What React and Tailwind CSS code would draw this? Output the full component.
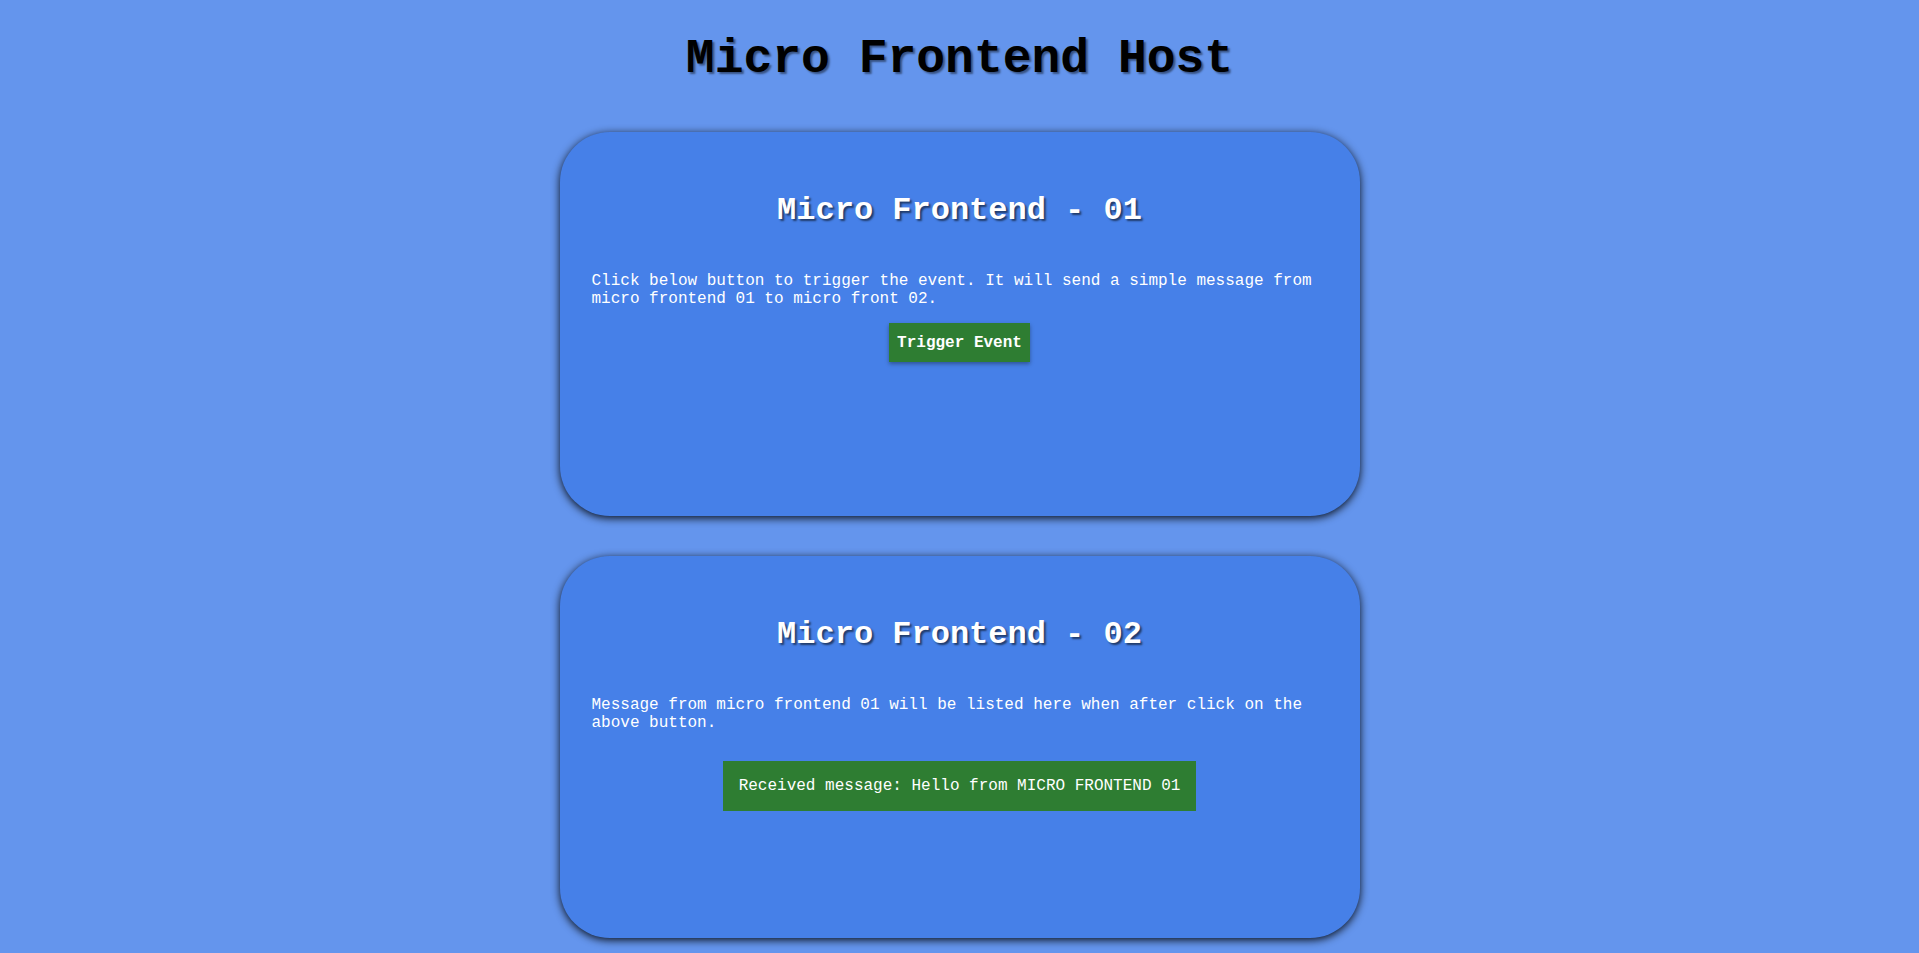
import React from "react";

export default function App() {
  return (
    <div className="min-h-screen bg-[#6495ed] pb-6 font-['Liberation_Mono','Courier_New',monospace]">
      {/* Host title */}
      <h1 className="pt-8 text-center text-[48px] leading-[54px] font-bold text-black [text-shadow:2px_2px_2px_rgba(0,0,0,0.45)]">
        Micro Frontend Host
      </h1>

      <div className="mt-[46px] flex flex-col items-center gap-10">
        {/* Micro frontend 01 */}
        <div className="w-[800px] h-[384px] rounded-[50px] bg-[#4680e8] px-8 pt-[61px] shadow-[0_2px_9px_rgba(0,0,0,0.9)]">
          <h2 className="text-center text-[32px] leading-[36px] font-bold text-white [text-shadow:2px_2px_2px_rgba(0,0,0,0.55)]">
            Micro Frontend - 01
          </h2>
          <p className="mt-[43px] text-base leading-[18px] text-white">
            Click below button to trigger the event. It will send a simple message from micro frontend 01 to micro front 02.
          </p>
          <div className="mt-[15px] flex justify-center">
            <button className="h-[39px] px-2 bg-[#2e7d32] text-base leading-[18px] font-bold text-white shadow-[0_2px_4px_rgba(0,0,0,0.35)]">
              Trigger Event
            </button>
          </div>
        </div>

        {/* Micro frontend 02 */}
        <div className="w-[800px] h-[382px] rounded-[50px] bg-[#4680e8] px-8 pt-[61px] shadow-[0_2px_9px_rgba(0,0,0,0.9)]">
          <h2 className="text-center text-[32px] leading-[36px] font-bold text-white [text-shadow:2px_2px_2px_rgba(0,0,0,0.55)]">
            Micro Frontend - 02
          </h2>
          <p className="mt-[43px] text-base leading-[18px] text-white">
            Message from micro frontend 01 will be listed here when after click on the above button.
          </p>
          <div className="mt-[29px] flex justify-center">
            <div className="bg-[#2e7d32] px-4 py-4 text-base leading-[18px] text-white">
              Received message: Hello from MICRO FRONTEND 01
            </div>
          </div>
        </div>
      </div>
    </div>
  );
}
